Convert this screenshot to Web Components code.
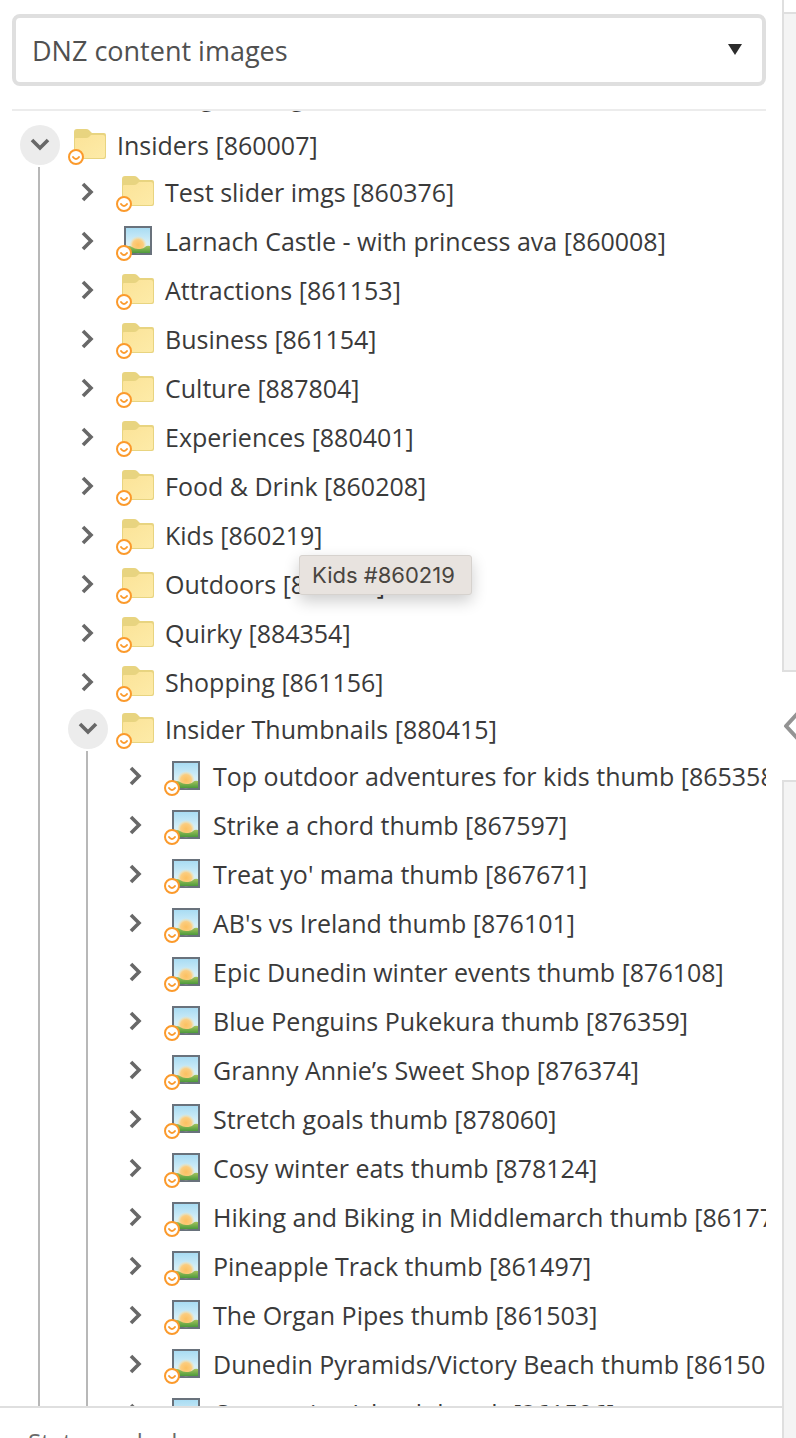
<!DOCTYPE html>
<html lang="en">
<head>
<meta charset="utf-8">
<title>DNZ content images</title>
<style>
	html, body {
		height: 100%;
		margin: 0;
	}
	body {
		background: #fff;
		color: #3a3a3a;
		font: 25px/36px "Open Sans", "Noto Sans", sans-serif;
	}
</style>
</head>
<body>
<asset-manager></asset-manager>

<script>
const treeData = [
	{name: "Heading catalog", id: 860001, type: "folder", plain: true},
	{name: "Insiders", id: 860007, type: "folder", children: [
		{name: "Test slider imgs", id: 860376, type: "folder"},
		{name: "Larnach Castle - with princess ava", id: 860008, type: "image"},
		{name: "Attractions", id: 861153, type: "folder"},
		{name: "Business", id: 861154, type: "folder"},
		{name: "Culture", id: 887804, type: "folder"},
		{name: "Experiences", id: 880401, type: "folder"},
		{name: "Food & Drink", id: 860208, type: "folder"},
		{name: "Kids", id: 860219, type: "folder", hovered: true},
		{name: "Outdoors", id: 861155, type: "folder"},
		{name: "Quirky", id: 884354, type: "folder"},
		{name: "Shopping", id: 861156, type: "folder"},
		{name: "Insider Thumbnails", id: 880415, type: "folder", children: [
			{name: "Top outdoor adventures for kids thumb", id: 865358, type: "image"},
			{name: "Strike a chord thumb", id: 867597, type: "image"},
			{name: "Treat yo' mama thumb", id: 867671, type: "image"},
			{name: "AB's vs Ireland thumb", id: 876101, type: "image"},
			{name: "Epic Dunedin winter events thumb", id: 876108, type: "image"},
			{name: "Blue Penguins Pukekura thumb", id: 876359, type: "image"},
			{name: "Granny Annie’s Sweet Shop", id: 876374, type: "image"},
			{name: "Stretch goals thumb", id: 878060, type: "image"},
			{name: "Cosy winter eats thumb", id: 878124, type: "image"},
			{name: "Hiking and Biking in Middlemarch thumb", id: 861775, type: "image"},
			{name: "Pineapple Track thumb", id: 861497, type: "image"},
			{name: "The Organ Pipes thumb", id: 861503, type: "image"},
			{name: "Dunedin Pyramids/Victory Beach thumb", id: 861505, type: "image"},
			{name: "Quarantine Island thumb", id: 861506, type: "image"},
		]},
	]},
];

const icons = {
	folder: `
		<defs>
			<linearGradient id="paper" x1="0" y1="0" x2="1" y2="1">
				<stop offset="0" stop-color="#fbe398"/>
				<stop offset="1" stop-color="#fdeba8"/>
			</linearGradient>
		</defs>
		<path fill="#e8d480" d="M6 7q0-3 3-3h9q2 0 3 1l3 3h12q2 0 2 2v22q0 2-2 2H8q-2 0-2-2z"/>
		<path fill="url(#paper)" d="M7 14q0-1 1-1h10q2 0 3-1l2-2h12q2 0 2 2v19q0 2-2 2H9q-2 0-2-2z"/>`,
	image: `
		<defs>
			<linearGradient id="sky" x1="0" y1="0" x2="0" y2="1">
				<stop offset="0" stop-color="#a9dcf3"/>
				<stop offset=".6" stop-color="#d5eff8"/>
			</linearGradient>
			<linearGradient id="grass" x1="0" y1="0" x2="0" y2="1">
				<stop offset="0" stop-color="#a5c35c"/>
				<stop offset="1" stop-color="#4c9a3c"/>
			</linearGradient>
			<radialGradient id="sun">
				<stop offset="0" stop-color="#fcc060"/>
				<stop offset=".6" stop-color="#fbcd80"/>
				<stop offset="1" stop-color="#fbe5b0" stop-opacity="0"/>
			</radialGradient>
		</defs>
		<path fill="#69727c" d="M8 5h28v29H8z"/>
		<path fill="url(#sky)" d="M10 7h24v25H10z"/>
		<circle cx="22" cy="24" r="9" fill="url(#sun)"/>
		<path fill="url(#grass)" d="M10 26q3-2 6 0t6 2q5 0 7-2t5-1v7H10z"/>`,
};

const badge = `
	<circle cx="8" cy="32" r="7" fill="#fff" stroke="#fb9a2c" stroke-width="2"/>
	<path d="M5 32q3 4 6 0" fill="none" stroke="#fb9a2c" stroke-width="2" stroke-linecap="round"/>`;

class AssetIcon extends HTMLElement {
	connectedCallback() {
		let shadow = this.attachShadow({mode: "open"});
		shadow.innerHTML = `
			<style>
				:host {
					display: block;
					flex: none;
				}
				svg {
					display: block;
					width: 40px;
					height: 40px;
				}
			</style>
			<svg viewBox="0 0 40 40" aria-hidden="true">
				${icons[this.getAttribute("type")]}
				${this.hasAttribute("plain") ? "" : badge}
			</svg>
		`;
	}
}
customElements.define("asset-icon", AssetIcon);

class HoverTip extends HTMLElement {
	connectedCallback() {
		let shadow = this.attachShadow({mode: "open"});
		shadow.innerHTML = `
			<style>
				:host {
					display: block;
					padding: 4px 16px 4px 12px;
					border: 1px solid #d6d2ce;
					border-radius: 3px;
					background: #e8e3df;
					box-shadow: 0 6px 16px rgba(0, 0, 0, .2);
					color: #494540;
					font: 22px/30px Inter, sans-serif;
					white-space: nowrap;
				}
			</style>
			<slot></slot>
		`;
	}
}
customElements.define("hover-tip", HoverTip);

// One node of the tree. Child nodes are slotted in and indented below the row.
class TreeItem extends HTMLElement {
	connectedCallback() {
		let shadow = this.attachShadow({mode: "open"});
		let open = this.hasAttribute("open");
		let plain = this.hasAttribute("plain") ? "plain" : "";
		shadow.innerHTML = `
			<style>
				:host {
					display: block;
				}
				.row {
					position: relative;
					display: flex;
					align-items: center;
					height: 49px;
					white-space: nowrap;
				}
				:host([open]) > .row {
					height: 45px;
				}
				button {
					display: grid;
					place-items: center;
					flex: none;
					width: 40px;
					height: 40px;
					margin: 0 8px 0 0;
					padding: 0;
					border: 0;
					border-radius: 50%;
					background: none;
					cursor: pointer;
				}
				:host([open]) > .row button {
					background: #ececec;
				}
				button svg {
					width: 24px;
					height: 24px;
				}
				:host([open]) > .row button svg {
					transform: rotate(90deg);
				}
				a {
					display: flex;
					align-items: center;
					gap: 9px;
					color: inherit;
					text-decoration: none;
				}
				.children {
					margin-left: 18px;
					padding-left: 28px;
					border-left: 2px solid #b8b8b8;
				}
				hover-tip {
					position: absolute;
					z-index: 1;
					top: 45px;
					left: 231px;
				}
			</style>
			<div class="row">
				<button type="button" aria-label="Toggle" aria-expanded="${open}">
					<svg viewBox="0 0 24 24" aria-hidden="true">
						<path d="M7 4l8 8-8 8" fill="none" stroke="#686868" stroke-width="3.6"/>
					</svg>
				</button>
				<a href="#"><asset-icon type="${this.getAttribute("type")}" ${plain}></asset-icon><span id="label"></span></a>
			</div>
			<div class="children" role="group" ${open ? "" : "hidden"}><slot></slot></div>
		`;
		let name = this.getAttribute("name");
		let id = this.getAttribute("asset");
		shadow.getElementById("label").textContent = `${name} [${id}]`;
		if (this.hasAttribute("hovered")) {
			let tip = document.createElement("hover-tip");
			tip.textContent = `${name} #${id}`;
			shadow.querySelector(".row").appendChild(tip);
		}
		shadow.querySelector("button").addEventListener("click", () => this.toggle());
	}

	toggle() {
		let open = this.toggleAttribute("open");
		this.shadowRoot.querySelector("button").setAttribute("aria-expanded", open);
		this.shadowRoot.querySelector(".children").hidden = !open;
	}
}
customElements.define("tree-item", TreeItem);

class RootSelect extends HTMLElement {
	connectedCallback() {
		let shadow = this.attachShadow({mode: "open"});
		shadow.innerHTML = `
			<style>
				:host {
					display: block;
					position: relative;
				}
				select {
					display: block;
					width: 100%;
					height: 72px;
					padding: 1px 48px 0 16px;
					border: 4px solid #dfdfdf;
					border-radius: 8px;
					background: #fff;
					color: #505050;
					font: inherit;
					font-size: 27px;
					appearance: none;
				}
				svg {
					position: absolute;
					top: 30px;
					right: 23px;
					width: 16px;
					height: 11px;
					pointer-events: none;
				}
			</style>
			<select aria-label="Root folder">
				<option>DNZ content images</option>
			</select>
			<svg viewBox="0 0 16 11" aria-hidden="true"><path fill="#2c2c2c" d="M1 0h14L8 11z"/></svg>
		`;
	}
}
customElements.define("root-select", RootSelect);

class SideRail extends HTMLElement {
	connectedCallback() {
		let shadow = this.attachShadow({mode: "open"});
		shadow.innerHTML = `
			<style>
				:host {
					display: flex;
					flex-direction: column;
					overflow: hidden;
				}
				.head {
					height: 12px;
					border-left: 2px solid #dfdfdf;
				}
				.panel {
					flex: 1;
					border: 2px solid #dfdfdf;
					border-right: 0;
					background: #f4f4f4;
				}
				.lower {
					border-bottom: 0;
				}
				button {
					flex: none;
					height: 108px;
					padding: 0;
					border: 0;
					background: none;
					text-align: left;
					cursor: pointer;
				}
				svg {
					display: block;
					width: 28px;
					height: 28px;
				}
			</style>
			<div class="head"></div>
			<div class="panel"></div>
			<button type="button" aria-label="Collapse panel">
				<svg viewBox="0 0 28 28" aria-hidden="true">
					<path d="M16 1L4 14l12 13" fill="none" stroke="#939393" stroke-width="4" stroke-linecap="round" stroke-linejoin="round"/>
				</svg>
			</button>
			<div class="panel lower"></div>
		`;
	}
}
customElements.define("side-rail", SideRail);

class AssetManager extends HTMLElement {
	connectedCallback() {
		let shadow = this.attachShadow({mode: "open"});
		this.shadow = shadow;
		shadow.innerHTML = `
			<style>
				:host {
					display: grid;
					grid-template-columns: minmax(0, 1fr) 14px;
					height: 100%;
					overflow: hidden;
				}
				main {
					display: flex;
					flex-direction: column;
					min-height: 0;
				}
				root-select {
					margin: 14px 16px 23px 12px;
				}
				#tree {
					display: flex;
					flex-direction: column;
					flex: 1;
					min-height: 0;
					margin: 0 16px 0 12px;
					padding-left: 8px;
					border-top: 2px solid #ececec;
					overflow: hidden;
				}
				/* scrolled down to the second folder */
				#tree > tree-item:first-child {
					margin: -40px 0 2px;
				}
				footer {
					box-sizing: border-box;
					flex: none;
					height: 32px;
					padding: 16px 28px 0;
					border-top: 2px solid #dfdfdf;
					color: #6a6a6a;
					font-size: 24px;
					overflow: hidden;
				}
			</style>
			<main>
				<root-select></root-select>
				<div id="tree"></div>
				<footer>State marked</footer>
			</main>
			<side-rail></side-rail>
		`;
		this.addItems(shadow.getElementById("tree"), treeData);
	}

	addItems(parent, items) {
		for (let item of items) {
			let node = document.createElement("tree-item");
			node.setAttribute("name", item.name);
			node.setAttribute("asset", item.id);
			node.setAttribute("type", item.type);
			node.toggleAttribute("plain", !!item.plain);
			node.toggleAttribute("hovered", !!item.hovered);
			node.toggleAttribute("open", !!item.children);
			this.addItems(node, item.children || []);
			parent.appendChild(node);
		}
	}
}
customElements.define("asset-manager", AssetManager);
</script>
</body>
</html>
